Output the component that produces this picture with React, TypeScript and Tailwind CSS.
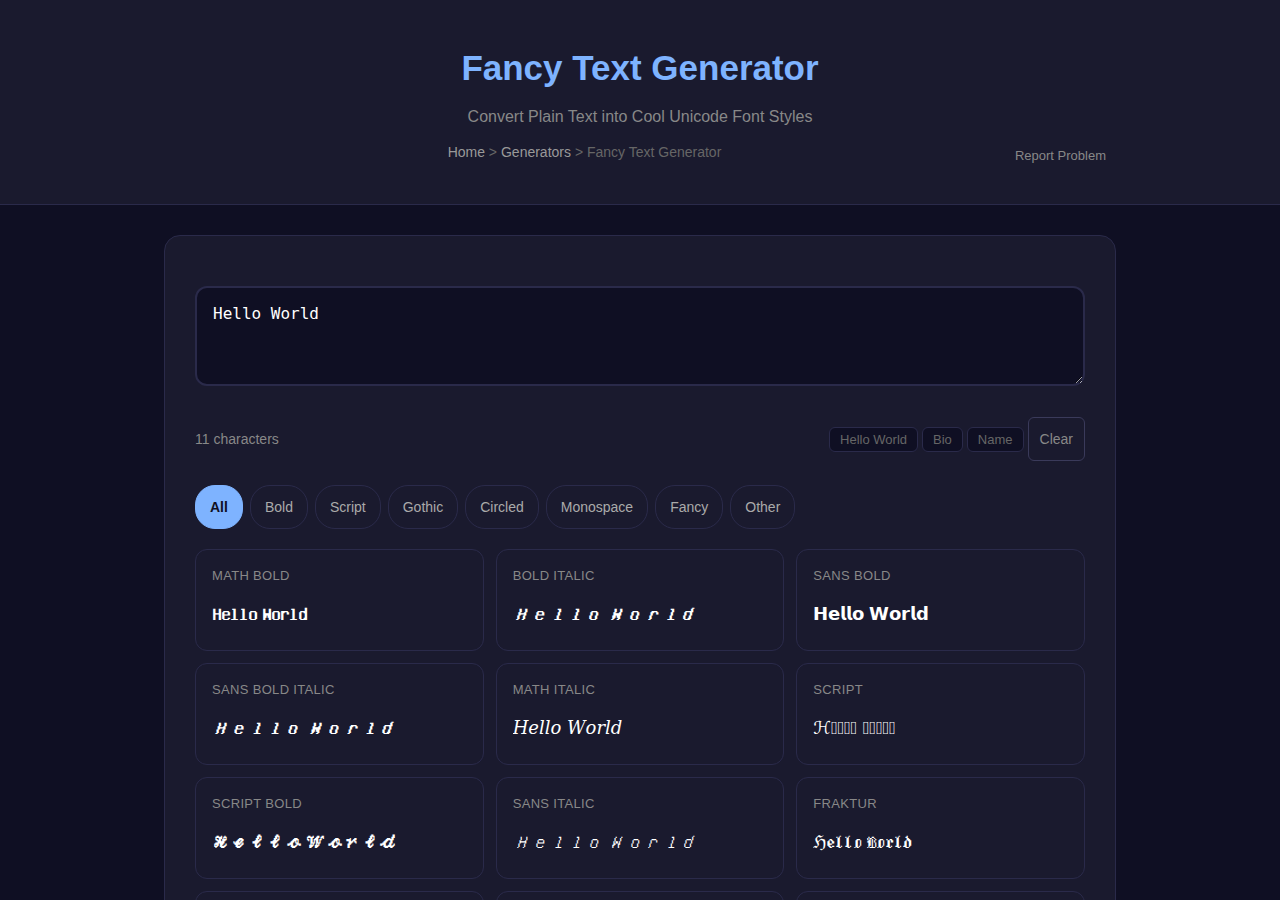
import { useState } from "react";

const CATEGORIES = ["All", "Bold", "Script", "Gothic", "Circled", "Monospace", "Fancy", "Other"];

const PRESETS = [
  { label: "Hello World", text: "Hello World" },
  { label: "Bio", text: "Dreamer | Creator | Explorer" },
  { label: "Name", text: "Your Name" },
];

interface FontStyle {
  name: string;
  category: string;
  upper: number;
  lower: number;
  // letters that live outside the math block
  exceptions?: Record<string, string>;
  missing?: string;
  font?: string;
}

const SCRIPT_EXCEPTIONS = { B: "ℬ", E: "ℰ", F: "ℱ", H: "ℋ", I: "ℐ", L: "ℒ", M: "ℳ", R: "ℛ" };
const FRAKTUR_EXCEPTIONS = { C: "ℭ", H: "ℌ", I: "ℑ", R: "ℜ", Z: "ℨ" };
const DOUBLE_EXCEPTIONS = { C: "ℂ", H: "ℍ", N: "ℕ", P: "ℙ", Q: "ℚ", R: "ℝ", Z: "ℤ" };

const DEFAULT_FONT = "font-['Liberation_Sans','Unifont_Upper',sans-serif]";

const STYLES: FontStyle[] = [
  { name: "Math Bold", category: "Bold", upper: 0x1d400, lower: 0x1d41a },
  { name: "Bold Italic", category: "Bold", upper: 0x1d468, lower: 0x1d482 },
  {
    name: "Sans Bold",
    category: "Bold",
    upper: 0x1d5d4,
    lower: 0x1d5ee,
    font: "font-['Liberation_Sans','DejaVu_Sans',sans-serif]",
  },
  { name: "Sans Bold Italic", category: "Bold", upper: 0x1d63c, lower: 0x1d656 },
  {
    name: "Math Italic",
    category: "Script",
    upper: 0x1d434,
    lower: 0x1d44e,
    exceptions: { h: "ℎ" },
    font: "font-['DejaVu_Serif',serif]",
  },
  {
    name: "Script",
    category: "Script",
    upper: 0x1d49c,
    lower: 0x1d4b6,
    exceptions: SCRIPT_EXCEPTIONS,
    missing: "\uE123",
    font: "font-['DejaVu_Math_TeX_Gyre'] first-letter:font-['DejaVu_Sans']",
  },
  { name: "Script Bold", category: "Script", upper: 0x1d4d0, lower: 0x1d4ea },
  { name: "Sans Italic", category: "Script", upper: 0x1d608, lower: 0x1d622 },
  { name: "Fraktur", category: "Gothic", upper: 0x1d504, lower: 0x1d51e, exceptions: FRAKTUR_EXCEPTIONS },
  { name: "Fraktur Bold", category: "Gothic", upper: 0x1d56c, lower: 0x1d586 },
  { name: "Double Struck", category: "Fancy", upper: 0x1d538, lower: 0x1d552, exceptions: DOUBLE_EXCEPTIONS },
  { name: "Monospace", category: "Monospace", upper: 0x1d670, lower: 0x1d68a },
  { name: "Circled", category: "Circled", upper: 0x24b6, lower: 0x24d0 },
  { name: "Fullwidth", category: "Other", upper: 0xff21, lower: 0xff41 },
];

function convert(text: string, style: FontStyle) {
  return Array.from(text)
    .map((ch) => {
      if (style.exceptions?.[ch]) return style.exceptions[ch];
      if (style.missing && /[a-z]/i.test(ch)) return style.missing;
      if (ch >= "A" && ch <= "Z") return String.fromCodePoint(style.upper + ch.charCodeAt(0) - 65);
      if (ch >= "a" && ch <= "z") return String.fromCodePoint(style.lower + ch.charCodeAt(0) - 97);
      return ch;
    })
    .join("");
}

function Header() {
  return (
    <header className="border-b border-[#2a2a4a] bg-[#1a1a2e] px-6 pt-10 pb-[30px] text-center">
      <h1 className="text-[35px] leading-[56px] font-bold text-[#7eb3ff]">Fancy Text Generator</h1>
      <p className="mt-2 text-base leading-[26px] text-[#888]">
        Convert Plain Text into Cool Unicode Font Styles
      </p>
      <div className="mx-auto mt-2 flex max-w-[952px] items-start">
        <nav aria-label="Breadcrumb" className="flex-1 pt-1 text-sm leading-5 text-[#666]">
          <a href="#home" className="text-[#999]">Home</a> &gt;{" "}
          <a href="#generators" className="text-[#999]">Generators</a> &gt; Fancy Text Generator
        </nav>
        <button type="button" className="px-2.5 py-2 text-[13px] leading-5 text-[#888]">
          Report Problem
        </button>
      </div>
    </header>
  );
}

function StyleCard({ name, value, font }: { name: string; value: string; font: string }) {
  return (
    <button
      type="button"
      onClick={() => navigator.clipboard?.writeText(value)}
      className="flex flex-col rounded-xl border border-[#2a2a4a] p-4 text-left"
    >
      <span className="mb-2 text-[13px] leading-5 tracking-wide text-[#888] uppercase">{name}</span>
      <span className={`h-10 max-w-full overflow-hidden text-lg leading-10 whitespace-nowrap text-white ${font}`}>
        {value}
      </span>
    </button>
  );
}

export default function App() {
  const [text, setText] = useState("Hello World");
  const [category, setCategory] = useState("All");

  const visible = STYLES.filter((s) => category === "All" || s.category === category);

  return (
    <div className="min-h-screen bg-[#0f0f23] font-['Liberation_Sans',Arial,sans-serif]">
      <Header />
      <main className="px-6 py-[30px]">
        <div className="mx-auto max-w-[952px] rounded-2xl border border-[#2a2a4a] bg-[#1a1a2e] px-[30px] pt-[50px] pb-[30px]">
          <textarea
            aria-label="Your text"
            value={text}
            onChange={(e) => setText(e.target.value)}
            className="block h-[100px] w-full resize-y rounded-xl border-2 border-[#2a2a4a] bg-[#0f0f23] p-4 font-['DejaVu_Sans_Mono',monospace] text-base leading-[19px] text-white outline-none"
          />

          <div className="mt-[31px] flex items-center justify-between">
            <span className="text-sm text-[#888]">{text.length} characters</span>
            <div className="flex items-center gap-1">
              {PRESETS.map((preset) => (
                <button
                  key={preset.label}
                  type="button"
                  onClick={() => setText(preset.text)}
                  className="rounded-md border border-[#2a2a4a] bg-[#0f0f23] px-2.5 py-1 text-[13px] leading-[15px] text-[#666]"
                >
                  {preset.label}
                </button>
              ))}
              <button
                type="button"
                onClick={() => setText("")}
                className="h-11 rounded-md border border-[#3a3a5a] px-[11px] text-sm text-[#888]"
              >
                Clear
              </button>
            </div>
          </div>

          <div className="mt-6 flex flex-wrap gap-[7px]">
            {CATEGORIES.map((c) => (
              <button
                key={c}
                type="button"
                aria-pressed={c === category}
                onClick={() => setCategory(c)}
                className={`h-11 rounded-[20px] border px-3.5 text-sm ${
                  c === category
                    ? "border-[#7eb3ff] bg-[#7eb3ff] font-bold text-[#0f0f23]"
                    : "border-[#2a2a4a] text-[#aaa]"
                }`}
              >
                {c}
              </button>
            ))}
          </div>

          <div className="mt-5 grid grid-cols-[repeat(auto-fill,minmax(260px,1fr))] gap-3">
            {visible.map((s) => (
              <StyleCard key={s.name} name={s.name} value={convert(text, s)} font={s.font ?? DEFAULT_FONT} />
            ))}
          </div>
        </div>
      </main>
    </div>
  );
}
